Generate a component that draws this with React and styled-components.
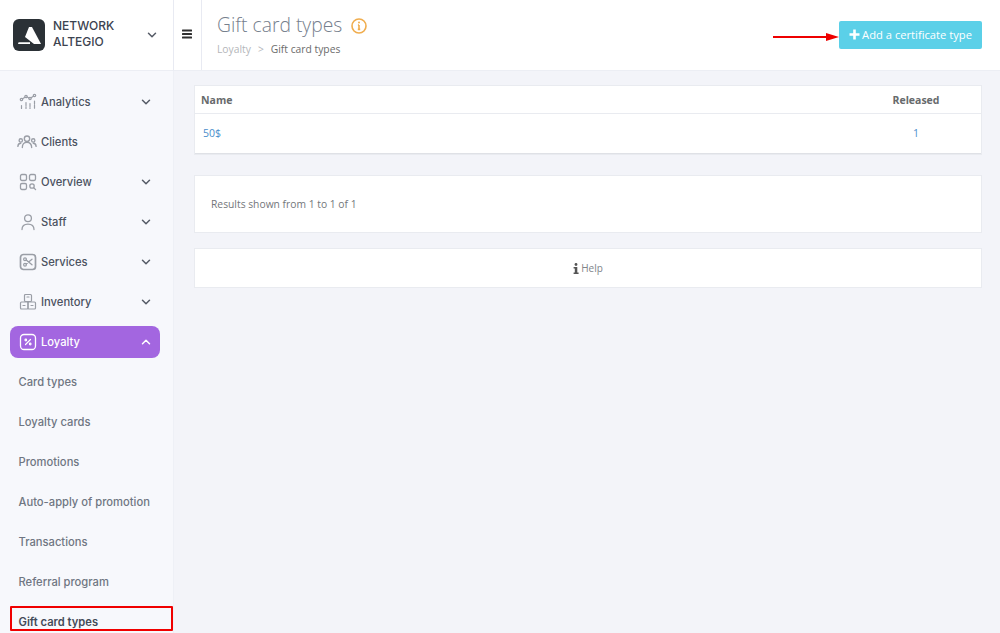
import styled, { createGlobalStyle } from "styled-components";

const GlobalStyle = createGlobalStyle`
  html, body { margin: 0; padding: 0; height: 100%; overflow: hidden; }
  body { background: #f3f4f9; font-family: "Open Sans", sans-serif; }
`;

const Page = styled.div`
  display: grid;
  grid-template-columns: 174px 1fr;
  grid-template-rows: 71px 1fr;
  width: 1000px;
  height: 633px;
  overflow: hidden;
`;

const Brand = styled.div`
  display: flex;
  align-items: center;
  background: #fff;
  border-right: 1px solid #e8eaf2;
  border-bottom: 1px solid #eceef4;
  padding: 0 16px 1px 13px;
`;

const BrandName = styled.div`
  flex: 1;
  margin-left: 8px;
  margin-top: -1px;
  font-family: Inter, sans-serif;
  font-size: 12px;
  font-weight: 500;
  line-height: 16px;
  color: #3c4350;
`;

const Header = styled.header`
  display: flex;
  align-items: stretch;
  background: #fff;
  border-bottom: 1px solid #eceef4;
`;

const Burger = styled.div`
  width: 27px;
  display: flex;
  align-items: center;
  justify-content: center;
  padding-bottom: 2px;
  border-right: 1px solid #e8eaf2;
`;

const Heading = styled.div`
  flex: 1;
  padding: 11px 0 0 15px;
`;

const TitleRow = styled.div`
  display: flex;
  align-items: center;
  gap: 9px;
`;

const Title = styled.h1`
  margin: 0;
  font-size: 19.3px;
  font-weight: 300;
  line-height: 28px;
  color: #76808d;
`;

const Crumbs = styled.div`
  display: flex;
  gap: 7px;
  margin-top: 3px;
  font-size: 10.3px;
  line-height: 15px;
  color: #6b6b6b;
`;

const CrumbMuted = styled.span`
  color: #b4b6ba;
`;

const Actions = styled.div`
  display: flex;
  align-items: center;
  padding: 0 18px 0 0;
`;

const AddButton = styled.button`
  display: flex;
  align-items: center;
  gap: 2px;
  height: 28px;
  padding: 0 10px 1px;
  border: 0;
  border-radius: 2px;
  background: #5bd0e8;
  color: #fff;
  font-family: "Open Sans", sans-serif;
  font-size: 11.2px;
  white-space: nowrap;
`;

const Arrow = styled.svg`
  margin-top: 3px;
`;

const Sidebar = styled.nav`
  background: #f7f8fc;
  border-right: 1px solid #eef0f6;
  padding: 15px 13px 0 10px;
  overflow: hidden;
`;

const NavRow = styled.div`
  display: flex;
  align-items: center;
  height: 32px;
  margin-bottom: 8px;
  padding: 0 9px;
  border-radius: 8px;
  font-family: Inter, sans-serif;
  font-size: 11.2px;
  font-weight: 500;
  color: ${({ $active }) => ($active ? "#fff" : "#4b5260")};
  background: ${({ $active }) => ($active ? "#a366e0" : "transparent")};
`;

const NavIcon = styled.span`
  display: flex;
  align-items: center;
  width: 18px;
  height: 18px;
  margin-right: 4px;
  color: ${({ $active }) => ($active ? "#fff" : "#9a9ea6")};
`;

const NavLabel = styled.span`
  flex: 1;
`;

const SubItem = styled.div`
  display: flex;
  align-items: center;
  height: 32px;
  margin-bottom: 8px;
  padding-left: 8.5px;
  font-family: Inter, sans-serif;
  font-size: 11.2px;
  font-weight: ${({ $current }) => ($current ? 600 : 500)};
  color: ${({ $current }) => ($current ? "#444b58" : "#6f7682")};
  white-space: nowrap;
`;

const Main = styled.main`
  padding: 14px 18px 0 20px;
  min-width: 0;
`;

const Panel = styled.section`
  background: #fff;
  border: 1px solid #e9ebf0;
  margin-bottom: ${({ $gap }) => $gap}px;
`;

const TableRow = styled.div`
  display: grid;
  grid-template-columns: 1fr 130px;
  align-items: center;
  height: ${({ $head }) => ($head ? 28 : 40)}px;
  padding-left: 6px;
  padding-bottom: ${({ $head }) => ($head ? 0 : 2)}px;
  box-sizing: border-box;
  font-size: 10.5px;
  font-weight: ${({ $head }) => ($head ? 700 : 400)};
  color: ${({ $head }) => ($head ? "#676a6c" : "#4a8ecb")};
  border-bottom: ${({ $head }) => ($head ? "1px solid #e9ebf0" : "1px solid #dfe1e6")};
`;

const NameCell = styled.span`
  padding-left: ${({ $indent }) => $indent}px;
`;

const ReleasedCell = styled.span`
  text-align: center;
`;

const Results = styled.div`
  display: flex;
  align-items: center;
  height: 56px;
  padding-left: 16px;
  font-size: 10.3px;
  color: #73767a;
`;

const Help = styled.div`
  display: flex;
  align-items: center;
  justify-content: center;
  gap: 2px;
  height: 38px;
  font-size: 10px;
  color: #80848a;
`;

const Marker = styled.div`
  position: absolute;
  left: 10px;
  top: 606px;
  width: 159px;
  height: 21px;
  border: 2px solid #f00000;
  border-radius: 1px;
  pointer-events: none;
`;

const Chevron = ({ up, color = "#555b66" }) => (
  <svg width="10" height="10" viewBox="0 0 10 10" fill="none" stroke={color} strokeWidth="1.5" strokeLinecap="round" strokeLinejoin="round">
    <path d={up ? "M1.5 6.8 5 3.3l3.5 3.5" : "M1.5 3.3 5 6.8l3.5-3.5"} />
  </svg>
);

const stroke = { fill: "none", stroke: "currentColor", strokeWidth: 1.2, strokeLinecap: "round", strokeLinejoin: "round" };

const icons = {
  analytics: (
    <svg width="18" height="18" viewBox="0 0 18 18" {...stroke}>
      <circle cx="2.5" cy="6.5" r="1.2" />
      <circle cx="7" cy="3.5" r="1.2" />
      <circle cx="11" cy="5.5" r="1.2" />
      <circle cx="15.5" cy="2.5" r="1.2" />
      <path d="M3.5 5.8 6 4.2M8 4l2 1M12 4.8l2.5-1.6M2.5 12.5v3M7 9.5v6M11 10.5v5M15.5 8v7.5" strokeDasharray="3 1.2" />
    </svg>
  ),
  clients: (
    <svg width="20" height="16" viewBox="0 2 18 14" {...stroke} style={{ marginLeft: -2, flexShrink: 0 }}>
      <circle cx="9" cy="6" r="2.4" />
      <circle cx="3.4" cy="7.6" r="1.5" />
      <circle cx="14.6" cy="7.6" r="1.5" />
      <path d="M4.8 14c0-3 1.8-4.6 4.2-4.6s4.2 1.6 4.2 4.6M.8 13c0-1.8 1-2.9 2.6-2.9M17.2 13c0-1.8-1-2.9-2.6-2.9" />
    </svg>
  ),
  overview: (
    <svg width="18" height="18" viewBox="0 0 18 18" {...stroke} strokeWidth="1.3">
      <rect x="1.5" y="1.5" width="6" height="6" rx="1.4" />
      <rect x="10.5" y="1.5" width="6" height="6" rx="1.4" />
      <rect x="1.5" y="10.5" width="6" height="6" rx="1.4" />
      <circle cx="13" cy="13" r="2.2" />
      <path d="m15 15 1.6 1.6" />
    </svg>
  ),
  staff: (
    <svg width="18" height="18" viewBox="0 0 18 18" {...stroke} strokeWidth="1.3">
      <circle cx="9" cy="5.2" r="3.4" />
      <path d="M3 16.5c0-3.6 2.6-5.4 6-5.4s6 1.8 6 5.4" />
    </svg>
  ),
  services: (
    <svg width="18" height="18" viewBox="0 0 18 18" {...stroke}>
      <rect x="1.5" y="1.5" width="15" height="15" rx="3" strokeWidth="1.7" />
      <circle cx="6" cy="6.2" r="1.4" />
      <circle cx="6" cy="11.8" r="1.4" />
      <path d="M7.2 7 13 11.8M7.2 11 13 6.2" strokeWidth="1.3" />
    </svg>
  ),
  inventory: (
    <svg width="18" height="18" viewBox="0 0 18 18" {...stroke}>
      <rect x="5.5" y="1.5" width="7" height="7" rx="1" />
      <rect x="1.5" y="9" width="7.5" height="7" rx="1" />
      <rect x="9" y="9" width="7.5" height="7" rx="1" />
      <path d="M8 4h2M4 12.5h2M12 12.5h2" />
    </svg>
  ),
  loyalty: (
    <svg width="18" height="18" viewBox="0 0 18 18" {...stroke}>
      <rect x="1.5" y="1.5" width="15" height="15" rx="3.5" strokeWidth="1.3" />
      <path d="m6.5 11.5 5-5" />
      <circle cx="6.8" cy="7" r="0.8" />
      <circle cx="11.2" cy="11" r="0.8" />
    </svg>
  ),
};

const navItems = [
  { label: "Analytics", icon: "analytics", hasMenu: true },
  { label: "Clients", icon: "clients" },
  { label: "Overview", icon: "overview", hasMenu: true },
  { label: "Staff", icon: "staff", hasMenu: true },
  { label: "Services", icon: "services", hasMenu: true },
  { label: "Inventory", icon: "inventory", hasMenu: true },
  { label: "Loyalty", icon: "loyalty", hasMenu: true, active: true },
];

const subItems = [
  "Card types",
  "Loyalty cards",
  "Promotions",
  "Auto-apply of promotion",
  "Transactions",
  "Referral program",
  "Gift card types",
];

export default function App() {
  return (
    <Page>
      <GlobalStyle />
      <Brand>
        <svg width="32" height="32" viewBox="0 0 32 32">
          <rect width="32" height="32" rx="6" fill="#2b3136" />
          <path d="M16 8h3l9 17h-7l-9-7z" fill="#fff" />
          <path d="M5.6 23.2H17V25H5z" fill="#fff" />
        </svg>
        <BrandName>
          NETWORK
          <br />
          ALTEGIO
        </BrandName>
        <Chevron />
      </Brand>
      <Header>
        <Burger>
          <svg width="11" height="10" viewBox="0 0 11 10" fill="#2f2f2f">
            <rect y="0.5" width="10" height="2" rx="0.5" />
            <rect y="4" width="10" height="2" rx="0.5" />
            <rect y="7.5" width="10" height="2" rx="0.5" />
          </svg>
        </Burger>
        <Heading>
          <TitleRow>
            <Title>Gift card types</Title>
            <svg width="16" height="16" viewBox="0 0 16 16" fill="none" stroke="#f0ad4e" style={{ marginTop: 2 }}>
              <circle cx="8" cy="8" r="7" strokeWidth="1.6" />
              <path d="M8 7v4.4M6.8 11.4h2.4M6.9 7h1.1" strokeWidth="1.6" />
              <circle cx="8" cy="4.6" r="1" fill="#f0ad4e" stroke="none" />
            </svg>
          </TitleRow>
          <Crumbs>
            <CrumbMuted>Loyalty</CrumbMuted>
            <CrumbMuted>&gt;</CrumbMuted>
            <span>Gift card types</span>
          </Crumbs>
        </Heading>
        <Actions>
          <Arrow width="66" height="10" viewBox="0 0 66 10">
            <path d="M0 4H55V6H0z" fill="#ee0000" />
            <path d="M53 1 66 5 53 9z" fill="#ee0000" />
          </Arrow>
          <AddButton>
            <svg width="11" height="11" viewBox="0 0 11 11" fill="#fff">
              <path d="M4.2 0.5h2.6v3.7h3.7v2.6H6.8v3.7H4.2V6.8H0.5V4.2h3.7z" />
            </svg>
            Add a certificate type
          </AddButton>
        </Actions>
      </Header>
      <Sidebar>
        {navItems.map((item) => (
          <NavRow key={item.label} $active={item.active}>
            <NavIcon $active={item.active}>{icons[item.icon]}</NavIcon>
            <NavLabel>{item.label}</NavLabel>
            {item.hasMenu && <Chevron up={item.active} color={item.active ? "#fff" : "#555b66"} />}
          </NavRow>
        ))}
        {subItems.map((label) => (
          <SubItem key={label} $current={label === "Gift card types"}>
            {label}
          </SubItem>
        ))}
      </Sidebar>
      <Main>
        <Panel $gap={20}>
          <TableRow $head>
            <NameCell $indent={0}>Name</NameCell>
            <ReleasedCell>Released</ReleasedCell>
          </TableRow>
          <TableRow>
            <NameCell $indent={2}>50$</NameCell>
            <ReleasedCell>1</ReleasedCell>
          </TableRow>
        </Panel>
        <Panel $gap={15}>
          <Results>Results shown from 1 to 1 of 1</Results>
        </Panel>
        <Panel $gap={0}>
          <Help>
            <svg width="6" height="11" viewBox="0 0 6 11" fill="#555">
              <circle cx="3" cy="1.5" r="1.4" />
              <path d="M0.6 4h3.7v5.6H5.6V11H0.6V9.6h1.2V5.4H0.6z" />
            </svg>
            Help
          </Help>
        </Panel>
      </Main>
      <Marker />
    </Page>
  );
}
